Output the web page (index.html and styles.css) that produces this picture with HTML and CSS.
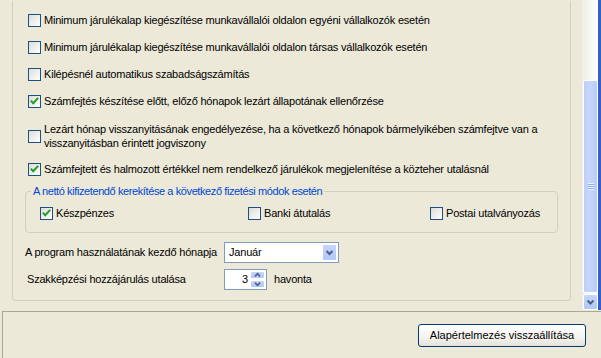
FILE: index.html
```html
<!DOCTYPE html>
<html lang="hu">
<head>
	<meta charset="UTF-8">
	<title>Beállítások</title>
	<link rel="stylesheet" href="styles.css">
</head>
<body>
	<div class="window">
		<div class="main">
			<div class="viewport">
				<div class="panel">
					<div class="options">
						<label class="check"><span class="box"></span>Minimum járulékalap kiegészítése munkavállalói oldalon egyéni vállalkozók esetén</label>
						<label class="check"><span class="box"></span>Minimum járulékalap kiegészítése munkavállalói oldalon társas vállalkozók esetén</label>
						<label class="check"><span class="box"></span>Kilépésnél automatikus szabadságszámítás</label>
						<label class="check"><span class="box checked"><svg viewBox="0 0 11 11"><path d="M1.8 4.6 L4.2 7.2 L9.2 1.9"/></svg></span>Számfejtés készítése előtt, előző hónapok lezárt állapotának ellenőrzése</label>
						<label class="check two-line"><span class="box"></span><span>Lezárt hónap visszanyitásának engedélyezése, ha a következő hónapok bármelyikében számfejtve van a<br>visszanyitásban érintett jogviszony</span></label>
						<label class="check"><span class="box checked"><svg viewBox="0 0 11 11"><path d="M1.8 4.6 L4.2 7.2 L9.2 1.9"/></svg></span>Számfejtett és halmozott értékkel nem rendelkező járulékok megjelenítése a közteher utalásnál</label>
					</div>

					<fieldset class="group">
						<legend>A nettó kifizetendő kerekítése a következő fizetési módok esetén</legend>
						<div class="group-row">
							<label class="check"><span class="box checked"><svg viewBox="0 0 11 11"><path d="M1.8 4.6 L4.2 7.2 L9.2 1.9"/></svg></span>Készpénzes</label>
							<label class="check"><span class="box"></span>Banki átutalás</label>
							<label class="check"><span class="box"></span>Postai utalványozás</label>
						</div>
					</fieldset>

					<div class="fields">
						<div class="field-row">
							<span class="field-label">A program használatának kezdő hónapja</span>
							<div class="combo">
								<span class="combo-text">Január</span>
								<span class="combo-btn"><svg viewBox="0 0 13 15"><path d="M3.5 6 L6.5 9 L9.5 6"/></svg></span>
							</div>
						</div>
						<div class="field-row">
							<span class="field-label indent">Szakképzési hozzájárulás utalása</span>
							<div class="spin">
								<span class="spin-text">3</span>
								<span class="spin-btns">
									<span class="spin-btn"><svg viewBox="0 0 13 7"><path d="M3.5 5 L6.5 2 L9.5 5"/></svg></span>
									<span class="spin-btn"><svg viewBox="0 0 13 7"><path d="M3.5 2 L6.5 5 L9.5 2"/></svg></span>
								</span>
							</div>
							<span class="unit">havonta</span>
						</div>
					</div>
				</div>
			</div>

			<div class="scrollbar">
				<div class="track"></div>
				<div class="thumb"><span class="grip"></span></div>
				<div class="arrow-btn"><svg viewBox="0 0 13 14"><path d="M3.5 5.5 L6.5 8.5 L9.5 5.5"/></svg></div>
			</div>
		</div>

		<div class="footer">
			<button class="btn">Alapértelmezés visszaállítása</button>
		</div>
	</div>
</body>
</html>
```

FILE: styles.css
```css
* {
	margin: 0;
	padding: 0;
	box-sizing: border-box;
}
body {
	font-family: "Liberation Sans", Arial, sans-serif;
	font-size: 11px;
	line-height: 13px;
	letter-spacing: -0.2px;
	color: #000;
	background: #ece9d8;
	width: 601px;
	height: 358px;
	overflow: hidden;
}
.window {
	display: flex;
	flex-direction: column;
	height: 358px;
}
.main {
	display: flex;
	height: 311px;
}
.viewport {
	flex: 1;
	display: flex;
	flex-direction: column;
	justify-content: flex-end;
	overflow: hidden;
}
.panel {
	margin: 0 11px 10px 12px;
	border: 1px solid #d0d0bf;
	border-top: 0;
	border-radius: 0 0 4px 4px;
	padding: 13px 12px 10px 12px;
}

/* checkboxes */
.options {
	display: flex;
	flex-direction: column;
	gap: 14px;
	padding-left: 3px;
}
.check {
	display: flex;
	align-items: center;
	gap: 2px;
	white-space: nowrap;
}
.check.two-line {
	line-height: 14px;
	margin-bottom: -1px;
}
.box {
	flex: none;
	width: 13px;
	height: 13px;
	border: 1px solid #1c5180;
	background: linear-gradient(135deg, #dcdcd7, #fff);
	margin-right: 1px;
}
.box svg {
	display: block;
	width: 11px;
	height: 11px;
}
.box path {
	fill: none;
	stroke: #21a121;
	stroke-width: 2;
}

/* group box */
.group {
	margin-top: 9px;
	border: 1px solid #d0d0bf;
	border-radius: 4px;
	padding: 9px 8px 12px 5px;
}
.group legend {
	color: #0046d5;
	padding: 0 2px;
	letter-spacing: -0.4px;
}
.group-row {
	display: grid;
	grid-template-columns: 208px 182px auto;
	padding-left: 9px;
}

/* fields */
.fields {
	display: flex;
	flex-direction: column;
	gap: 6px;
	margin-top: 9px;
}
.field-row {
	display: flex;
	align-items: center;
	height: 21px;
}
.field-label {
	width: 199px;
	flex: none;
	white-space: nowrap;
}
.field-label.indent {
	padding-left: 2px;
}
.combo {
	width: 115px;
	height: 21px;
	border: 1px solid #7f9db9;
	background: #fff;
	display: flex;
	align-items: center;
	justify-content: space-between;
	padding: 1px;
}
.combo-text {
	padding-left: 3px;
}
.combo-btn {
	width: 15px;
	height: 17px;
	border: 1px solid #fff;
	border-radius: 2px;
	background: linear-gradient(#c6d6fc, #b2c7f8);
}
.combo-btn svg,
.spin-btn svg,
.arrow-btn svg {
	display: block;
	width: 100%;
	height: 100%;
}
.combo-btn path,
.spin-btn path,
.arrow-btn path {
	fill: none;
	stroke: #4d6185;
	stroke-width: 2;
}
.spin {
	width: 43px;
	height: 21px;
	border: 1px solid #7f9db9;
	background: #fff;
	display: flex;
	align-items: center;
	padding: 1px;
}
.spin-text {
	flex: 1;
	text-align: right;
	padding-right: 2px;
}
.spin-btns {
	display: flex;
	flex-direction: column;
	gap: 1px;
	width: 15px;
	height: 17px;
}
.spin-btn {
	flex: none;
	height: 8px;
	border: 1px solid #fff;
	border-radius: 2px;
	background: linear-gradient(#c6d6fc, #b2c7f8);
	overflow: hidden;
}
.unit {
	margin-left: 7px;
}

/* scrollbar */
.scrollbar {
	width: 19px;
	display: flex;
	flex-direction: column;
	border-right: 3px solid #3161c8;
	background: linear-gradient(to right, #efede6, #fff);
	height: 310px;
}
.track {
	height: 80px;
	flex: none;
}
.thumb {
	flex: 1;
	margin: 0 0 1px 1px;
	border: 1px solid #fff;
	border-radius: 2px;
	background: linear-gradient(to right, #bccefa, #c6d6fc 40%, #b8cbf7);
	display: flex;
	align-items: center;
	justify-content: center;
}
.grip {
	width: 6px;
	height: 7px;
	background: repeating-linear-gradient(#eef4fe 0 1px, #8cb0f8 1px 2px);
}
.arrow-btn {
	height: 16px;
	flex: none;
	margin-left: 1px;
	border: 1px solid #fff;
	border-radius: 2px;
	background: linear-gradient(#c6d6fc, #b2c7f8);
}

/* footer */
.footer {
	flex: 1;
	margin-left: 2px;
	border-top: 1px solid #aca899;
	border-left: 1px solid #aca899;
	display: flex;
	justify-content: flex-end;
	align-items: flex-start;
	padding: 12px 15px 0 0;
}
.btn {
	font: inherit;
	width: 168px;
	height: 23px;
	border: 1px solid #003c74;
	border-radius: 3px;
	background: linear-gradient(#fff, #f4f3ee 60%, #e3e1d8);
	color: #000;
}
```
